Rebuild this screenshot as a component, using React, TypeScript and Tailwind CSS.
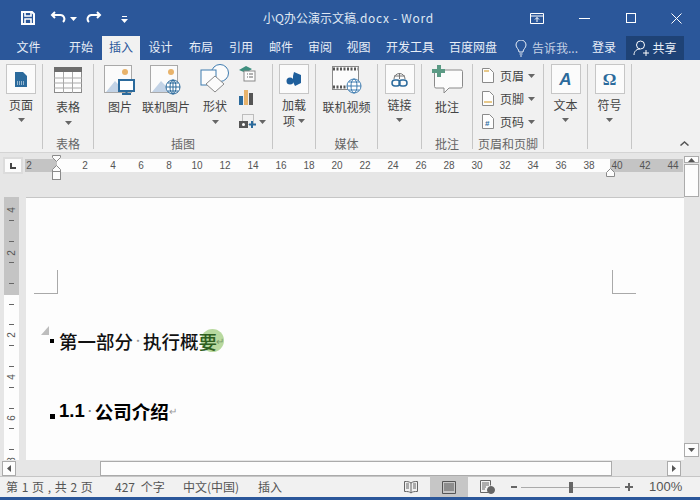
import React from "react";

const F = "font-['Noto_Sans_CJK_SC','Liberation_Sans',sans-serif]";

const Caret = ({ c = "#666" }: { c?: string }) => (
  <svg width="7" height="4" viewBox="0 0 7 4" className="shrink-0"><path d="M0 0h7L3.5 4z" fill={c} /></svg>
);

const Sep = ({ w, label, children }: { w: number; label: string; children: React.ReactNode }) => (
  <div style={{ width: w }} className="relative h-[85px] shrink-0 border-r border-[#c6c6c6] flex flex-col">
    <div className="h-[72px] shrink-0">{children}</div>
    <div className="h-[15px] shrink-0 text-center text-[12px] leading-[15px] text-[#666] whitespace-nowrap">{label}</div>
  </div>
);

const Big = ({ label, icon, boxed, caret = true, top = 0, second }: { label: string; icon: React.ReactNode; boxed?: boolean; caret?: boolean; top?: number; second?: string }) => (
  <div className="flex flex-col items-center h-full" style={{ paddingTop: top }}>
    <div className={boxed ? "w-[30px] h-[30px] border border-[#c6c6c6] bg-[#fbfbfb] flex items-center justify-center" : "h-[30px] flex items-center justify-center"}>{icon}</div>
    <div className={`${boxed ? "mt-[3px]" : "mt-[4px]"} text-[12px] leading-[16px] text-[#444] whitespace-nowrap`}>{label}</div>
    {second ? (
      <div className="flex items-center gap-[3px] text-[12px] leading-[16px] text-[#444]">{second}<Caret /></div>
    ) : caret ? (
      <div className={boxed ? "mt-[5px]" : "mt-[6px]"}><Caret /></div>
    ) : null}
  </div>
);

const Pic = ({ overlay }: { overlay: React.ReactNode }) => (
  <svg width="32" height="30" viewBox="0 0 32 30">
    <rect x=".5" y=".5" width="27" height="27" fill="#fbfbfb" stroke="#a9a9a9" />
    <circle cx="21" cy="7" r="3" fill="#e8b36b" />
    <path d="M2 27l9-11 6 6 3-3 7 8z" fill="#c3d3e6" />
    {overlay}
  </svg>
);

const HFIcon = ({ kind }: { kind: number }) => (
  <svg width="12" height="15" viewBox="0 0 12 15" className="shrink-0">
    <path d="M.5.5h7l4 4v10H.5z" fill="#fdfdfd" stroke="#8a8a8a" />
    {kind === 0 && <rect x="2" y="2" width="5" height="2" fill="#e8c98a" />}
    {kind === 1 && <rect x="2" y="10" width="8" height="2" fill="#e8c98a" />}
    {kind === 2 && <text x="3" y="12" fontSize="8" fontWeight="700" fill="#2b6a9c" fontFamily="Liberation Sans">#</text>}
  </svg>
);

const HFRow = ({ kind, label }: { kind: number; label: string }) => (
  <div className="flex items-center h-[23px] pl-[9px]">
    <HFIcon kind={kind} />
    <span className="ml-[6px] text-[12px] text-[#444] leading-none">{label}</span>
    <span className="ml-[4px]"><Caret /></span>
  </div>
);

const Tab = ({ t, w, active }: { t: string; w: number; active?: boolean }) => (
  <div style={{ width: w }} className={`h-[24px] shrink-0 text-center text-[12px] leading-[22px] whitespace-nowrap ${active ? "bg-[#f1f1f1] text-[#2b579a]" : "text-[#e8eef7]"}`}>{t}</div>
);

const Tick = ({ m }: { m: number }) => <div className="w-[5px] h-px bg-[#666] shrink-0" style={{ marginTop: m }} />;
const VNum = ({ n, m }: { n: string; m: number }) => <span className="-rotate-90 shrink-0 h-[10px]" style={{ marginTop: m }}>{n}</span>;

export default function App() {
  const hnums = ["2", "", "2", "4", "6", "8", "10", "12", "14", "16", "18", "20", "22", "24", "26", "28", "30", "32", "34", "36", "38", "40", "42", "44"];
  return (
    <div className={`${F} w-[700px] h-[500px] overflow-hidden bg-[#e6e6e6] flex flex-col`}>
      {/* title bar */}
      <div className="h-[36px] shrink-0 bg-[#2b579a] flex items-center text-white relative">
        <svg width="16" height="16" viewBox="0 0 16 16" className="ml-[20px]" fill="none" stroke="#fff" strokeWidth="2">
          <path d="M2 2h10l2 2v10H2z" /><path d="M5 2v4h6V2M5 14V9h6v5" strokeWidth="1.6" />
        </svg>
        <svg width="18" height="14" viewBox="0 0 18 14" className="ml-[14px]" fill="none" stroke="#fff" strokeWidth="2"><path d="M5 1L2 4l3 3M2 4h8a4 4 0 0 1 3 7" /></svg>
        <span className="ml-[2px] mt-[1px]"><Caret c="#fff" /></span>
        <svg width="16" height="14" viewBox="0 0 16 14" className="ml-[9px]" fill="none" stroke="#fff" strokeWidth="2"><path d="M11 1l3 3-3 3M14 4H6a4 4 0 0 0-3 7" /></svg>
        <svg width="7" height="7" viewBox="0 0 7 7" className="ml-[19px] mt-[3px]"><path d="M1 0h5v1H1zM0 3h7L3.500 7z" fill="#fff" /></svg>
        <div className="absolute left-[263px] top-[9px] text-[12px] leading-[18px] text-[#dfe7f3] whitespace-nowrap">小Q办公演示文稿<span className="tracking-[0.7px]">.docx - Word</span></div>
        <div className="ml-auto flex items-center">
          <svg width="14" height="11" viewBox="0 0 14 11" fill="none" stroke="#fff"><path d="M.5 .5h13v10H.5zM.5 3h13M7 9V4.500M5 6.500l2-2 2 2" /></svg>
          <div className="ml-[35px] w-[11px] h-px bg-white" />
          <div className="ml-[36px] w-[10px] h-[10px] border border-white" />
          <svg width="11" height="11" viewBox="0 0 11 11" className="ml-[35px] mr-[18px]" stroke="#fff" strokeWidth="1"><path d="M.5 .5l10 10M10.500 .5l-10 10" /></svg>
        </div>
      </div>
      {/* tabs */}
      <div className="h-[24px] shrink-0 bg-[#2b579a] flex items-start">
        <Tab t="文件" w={57} />
        <div className="w-[5px]" />
        <Tab t="开始" w={38} />
        <div className="w-[2px]" />
        <Tab t="插入" w={38} active />
        <Tab t="设计" w={41} />
        <Tab t="布局" w={40} />
        <Tab t="引用" w={40} />
        <Tab t="邮件" w={40} />
        <Tab t="审阅" w={38} />
        <Tab t="视图" w={39} />
        <Tab t="开发工具" w={64} />
        <Tab t="百度网盘" w={62} />
        <div className="flex items-center h-[24px] ml-[11px] w-[77px] text-[12px] text-[#c3d0e4] whitespace-nowrap">
          <svg width="12" height="17" viewBox="0 0 12 17" fill="none" stroke="#e8eef7" className="mr-[5px] shrink-0"><path d="M4 12c0-3-3-4-3-7a5 5 0 0 1 10 0c0 3-3 4-3 7zM4.500 14h3M5 16h2" /></svg>
          告诉我...
        </div>
        <div className="w-[34px] text-[12px] leading-[22px] text-[#e8eef7]">登录</div>
        <div className="w-[58px] h-[24px] bg-[#1e4276] flex items-center justify-center gap-[3px] text-[12px] text-[#e8eef7]">
          <svg width="16" height="16" viewBox="0 0 16 16" fill="none" stroke="#fff"><circle cx="7.500" cy="5" r="4" /><path d="M1 15c0-4 3-6 6-6M10 13h6M13 10v6" /></svg>
          共享
        </div>
      </div>
      {/* ribbon */}
      <div className="h-[93px] shrink-0 bg-[#f1f1f1] border-b border-[#d4d4d4] flex pt-[4px] relative">
        <Sep w={43} label="">
          <Big label="页面" boxed top={0} icon={
            <svg width="12" height="15" viewBox="0 0 12 15"><path d="M0 0h8l4 4v11H0z" fill="#2b6a9c" /><path d="M2 10h8M2 12h8" stroke="#fff" strokeWidth="1" strokeDasharray="1 1" /></svg>
          } />
        </Sep>
        <Sep w={51} label="表格">
          <Big label="表格" top={1} icon={
            <svg width="28" height="26" viewBox="0 0 28 26"><rect x=".5" y=".5" width="27" height="25" fill="#fdfdfd" stroke="#8a8a8a" /><rect width="28" height="5" fill="#6d6d6d" /><path d="M0 11h28M0 16h28M0 21h28M9.500 5v21M18.500 5v21" stroke="#a9a9a9" /></svg>
          } />
        </Sep>
        <Sep w={179} label="插图">
          <div className="flex h-full pl-[10px] items-start">
            <Big label="图片" top={1} caret={false} icon={
              <Pic overlay={<g><rect x="15" y="15" width="15" height="11" fill="#fff" stroke="#2b6a9c" strokeWidth="2" /><path d="M22.500 26v2M18 29h9" stroke="#2b6a9c" strokeWidth="2" /></g>} />
            } />
            <div className="ml-[6px]"><Big label="联机图片" top={1} caret={false} icon={
              <Pic overlay={<g fill="#fff" stroke="#2b6a9c"><circle cx="23" cy="22" r="7" /><path d="M16 22h14M23 15v14M18 18h10M18 26h10" fill="none" /><ellipse cx="23" cy="22" rx="3" ry="7" fill="none" /></g>} />
            } /></div>
            <div className="ml-[10px] w-[30px]"><Big label="形状" top={0} icon={
              <svg width="30" height="30" viewBox="0 0 30 30" fill="#fcfcfc" stroke="#3f7cb0"><circle cx="20" cy="9" r="8.500" /><rect x="1" y="6" width="15" height="15" /><path d="M15 12l9 8-9 8-9-8z" stroke="#8a8a8a" /></svg>
            } /></div>
            <div className="ml-[9px] pt-[2px] flex flex-col gap-[5px]">
              <svg width="17" height="17" viewBox="0 0 17 17"><path d="M0 4l7-4 6 3-6 4z" fill="#3f8f7f" /><rect x="5" y="5" width="11" height="10" fill="#fcfcfc" stroke="#8a8a8a" /><path d="M8 8h1M8 11h1M10 8h4M10 11h4" stroke="#666" /></svg>
              <svg width="15" height="16" viewBox="0 0 15 16" className="mt-[2px]"><rect y="6" width="4" height="9" fill="#2b6a9c" /><rect x="5" y="0" width="4" height="15" fill="#e8b36b" /><rect x="10" y="3" width="4" height="12" fill="#555" /></svg>
              <div className="flex items-center gap-[3px] mt-[3px]">
                <svg width="17" height="15" viewBox="0 0 17 15"><rect x="3.500" y=".5" width="11" height="10" fill="none" stroke="#888" strokeDasharray="1 1" /><rect y="7" width="9" height="7" fill="#555" /><circle cx="4.500" cy="10.500" r="1.500" fill="#fff" /><path d="M13 7v7M10 10.500h7" stroke="#2b6a9c" strokeWidth="2" /></svg>
                <Caret />
              </div>
            </div>
          </div>
        </Sep>
        <Sep w={43} label="">
          <Big label="加载" boxed second="项" caret={false} icon={
            <svg width="16" height="15" viewBox="0 0 16 15" fill="#1f5f9c"><path d="M8 0l7 3v8l-6 3-2-4V4z" /><circle cx="4" cy="9" r="3.500" /></svg>
          } />
        </Sep>
        <Sep w={62} label="媒体">
          <Big label="联机视频" top={1} caret={false} icon={
            <svg width="30" height="28" viewBox="0 0 30 28"><rect x=".5" y=".5" width="26" height="23" fill="#fcfcfc" stroke="#8a8a8a" /><path d="M1 3h25M1 21h25" stroke="#555" strokeWidth="3" strokeDasharray="2 1.500" /><g fill="#fff" stroke="#3f7cb0"><circle cx="22" cy="20" r="7" /><ellipse cx="22" cy="20" rx="3" ry="7" fill="none" /><path d="M15 20h14M17 16h10M17 24h10" fill="none" /></g></svg>
          } />
        </Sep>
        <Sep w={44} label="">
          <Big label="链接" boxed icon={
            <svg width="17" height="17" viewBox="0 0 17 17" fill="none"><path d="M3 8a5.500 5.500 0 0 1 11 0M3 5h11M8.500 2v6" stroke="#777" /><rect x="1" y="9" width="8" height="6" rx="3" stroke="#2b6a9c" strokeWidth="1.500" /><rect x="8" y="9" width="8" height="6" rx="3" stroke="#2b6a9c" strokeWidth="1.500" /></svg>
          } />
        </Sep>
        <Sep w={51} label="批注">
          <Big label="批注" top={1} caret={false} icon={
            <svg width="31" height="30" viewBox="0 0 31 30"><path d="M4 5h25a1.500 1.500 0 0 1 1.500 1.500v15a1.500 1.500 0 0 1-1.500 1.500H17l-5 5v-5H4a1.500 1.500 0 0 1-1.500-1.500v-15A1.500 1.500 0 0 1 4 5z" fill="#fcfcfc" stroke="#8a8a8a" /><path d="M5 0h4v4h4v4H9v4H5V8H0V4h5z" fill="#5b9a84" /></svg>
          } />
        </Sep>
        <Sep w={71} label="页眉和页脚">
          <div className="flex flex-col">
            <HFRow kind={0} label="页眉" />
            <HFRow kind={1} label="页脚" />
            <HFRow kind={2} label="页码" />
          </div>
        </Sep>
        <Sep w={44} label="">
          <Big label="文本" boxed icon={
            <span className="text-[17px] leading-none font-bold italic text-[#2b6a9c] font-['Liberation_Sans',sans-serif]">A</span>
          } />
        </Sep>
        <Sep w={44} label="">
          <Big label="符号" boxed icon={
            <span className="text-[17px] leading-none font-bold text-[#2b6a9c] font-['Liberation_Serif',serif]">Ω</span>
          } />
        </Sep>
        <svg width="9" height="5" viewBox="0 0 9 5" fill="none" stroke="#555" strokeWidth="1.500" className="absolute right-[11px] bottom-[6px]"><path d="M.5 4.500l4-3.500 4 3.500" /></svg>
      </div>
      {/* ruler row */}
      <div className="h-[44px] shrink-0 flex items-start pt-[4px] bg-[#e6e6e6]">
        <div className="ml-[3px] w-[20px] h-[17px] bg-[#fcfcfc] border-2 border-[#dcdcdc] flex items-center justify-center">
          <svg width="6" height="6" viewBox="0 0 6 6"><path d="M0 0h2v4h4v2H0z" fill="#444" /></svg>
        </div>
        <div className="relative ml-[2px] mt-[2px] w-[658px] h-[13px] bg-[#fdfdfd] flex">
          <div className="w-[32px] shrink-0 bg-[#c4c4c4]" />
          <div className="flex-1" />
          <div className="w-[73px] shrink-0 bg-[#c4c4c4]" />
          <div className="absolute inset-0 overflow-hidden flex">
            <div className="flex -ml-[10px]">
              {hnums.map((n, i) => (
                <div key={i} className="w-[28px] shrink-0 text-center text-[10px] leading-[13px] text-[#555] font-['Liberation_Sans',sans-serif]">{n}</div>
              ))}
            </div>
          </div>
          <svg width="10" height="26" viewBox="0 0 10 26" className="absolute left-[27px] -top-[4px]" fill="#fcfcfc" stroke="#8a8a8a"><path d="M.5 .5h8v2l-4 4-4-4zM4.500 10.500l4 4v2h-8v-2z" /><rect x=".5" y="16.500" width="8" height="8" /></svg>
          <svg width="10" height="10" viewBox="0 0 10 10" className="absolute left-[581px] top-[9px]" fill="#fcfcfc" stroke="#8a8a8a"><path d="M4.500 .5l4 4v4h-8v-4z" /></svg>
        </div>
        <div className="ml-[1px] w-[15px] h-[44px] flex flex-col -mt-[4px] pt-[3px] bg-[#e6e6e6]">
          <div className="h-[14px] border border-[#ababab] bg-[#fdfdfd] flex items-center justify-center"><svg width="7" height="4" viewBox="0 0 7 4"><path d="M3.500 0L7 4H0z" fill="#555" /></svg></div>
          <div className="h-[33px] shrink-0 border border-[#ababab] bg-[#fdfdfd] mt-[1px]" />
        </div>
      </div>
      {/* body */}
      <div className="flex-1 min-h-0 flex">
        <div className="ml-[4px] w-[15px] shrink-0 flex flex-col items-center bg-[#fdfdfd] overflow-hidden text-[10px] leading-[10px] text-[#555] font-['Liberation_Sans',sans-serif]">
          <div className="w-full h-[98px] shrink-0 bg-[#c4c4c4] flex flex-col items-center">
            <VNum n="4" m={8} /><Tick m={5} /><Tick m={20} /><VNum n="2" m={6} /><Tick m={4} /><Tick m={20} />
          </div>
          <Tick m={9} /><Tick m={19} /><VNum n="2" m={5} /><Tick m={5} /><Tick m={20} /><VNum n="4" m={5} /><Tick m={5} /><Tick m={20} /><VNum n="6" m={4} /><Tick m={5} /><Tick m={20} /><VNum n="8" m={5} />
        </div>
        <div className="ml-[7px] w-[658px] shrink-0 bg-[#fdfdfd] border-t border-[#c6c6c6] relative overflow-hidden">
          <div className="flex justify-between pl-[8px] pr-[48px] pt-[72px]">
            <div className="w-[24px] h-[24px] border-r border-b border-[#a9a9a9]" />
            <div className="w-[24px] h-[24px] border-l border-b border-[#a9a9a9]" />
          </div>
          <div className="pl-[24px] mt-[34px] flex items-center h-[26px] text-[18.5px] leading-[26px] text-[#111] font-medium whitespace-nowrap relative">
            <svg width="8" height="9" viewBox="0 0 8 9" className="absolute left-[15px] -top-[2px]"><path d="M8 0v9H0z" fill="#bdbdbd" /></svg>
            <div className="w-[4px] h-[4px] bg-black mr-[5px]" />
            第一部分<span className="text-[#999] text-[10px] w-[10px] text-center">·</span>执行概
            <span className="relative text-[#2f5f1f]">
              <span className="absolute left-[2px] top-[1px] w-[23px] h-[23px] rounded-full bg-[#b8d99f]" />
              <span className="relative">要</span>
            </span>
            <span className="relative text-[10px] text-[#7a9a6a] -ml-[1px]">↵</span>
          </div>
          <div className="pl-[24px] mt-[44px] flex items-center h-[26px] text-[18.5px] leading-[26px] text-black font-bold whitespace-nowrap">
            <div className="w-[5px] h-[5px] bg-black mr-[4px] mt-[11px]" />
            <span className="font-['Liberation_Sans',sans-serif]">1.1</span><span className="text-[#777] text-[10px] w-[10px] text-center font-normal">·</span>公司介绍
            <span className="text-[10px] text-[#999] font-normal">↵</span>
          </div>
        </div>
        <div className="w-[15px] shrink-0 flex flex-col justify-end pb-[3px]">
          <div className="h-[14px] border border-[#ababab] bg-[#fdfdfd] flex items-center justify-center"><Caret c="#555" /></div>
        </div>
      </div>
      {/* h scrollbar */}
      <div className="h-[16px] shrink-0 flex bg-[#e6e6e6] pt-[1px]">
        <div className="ml-[2px] w-[14px] h-[15px] border border-[#ababab] bg-[#fdfdfd] flex items-center justify-center"><svg width="4" height="7" viewBox="0 0 4 7"><path d="M4 0v7L0 3.500z" fill="#555" /></svg></div>
        <div className="ml-[84px] w-[512px] h-[15px] border border-[#ababab] bg-[#fdfdfd]" />
        <div className="ml-[55px] w-[14px] h-[15px] border border-[#ababab] bg-[#fdfdfd] flex items-center justify-center"><svg width="4" height="7" viewBox="0 0 4 7"><path d="M0 0v7l4-3.500z" fill="#555" /></svg></div>
      </div>
      {/* status bar */}
      <div className="h-[21px] shrink-0 bg-[#f1f1f1] border-t border-[#c6c6c6] flex items-center text-[12px] text-[#555] whitespace-nowrap">
        <span className="ml-[6px] w-[109px] [word-spacing:1px]">第 1 页 , 共 2 页</span>
        <span className="w-[68px] [word-spacing:3px]">427 个字</span>
        <span className="w-[75px]">中文(中国)</span>
        <span className="w-[120px]">插入</span>
        <svg width="14" height="13" viewBox="0 0 14 13" className="ml-[26px] shrink-0" fill="none" stroke="#666"><path d="M7 2C5 .5 3 .5 .5 .5v10c3 0 5 0 6.500 1.500 1.500-1.500 3.500-1.500 6.500-1.500V.5C11 .5 9 .5 7 2zM7 2v10M2 3h3M2 5h3M2 7h3M9 3h3M9 5h3M9 7h3" /></svg>
        <div className="ml-[12px] w-[38px] h-[20px] shrink-0 bg-[#c6c6c6] flex items-center justify-center">
          <svg width="14" height="13" viewBox="0 0 14 13" fill="none" stroke="#555"><path d="M.5 .5h13v12H.5zM2 3h10M2 5h10M2 7h10M2 9h10" /></svg>
        </div>
        <svg width="15" height="14" viewBox="0 0 15 14" className="ml-[12px] shrink-0" fill="none" stroke="#666"><path d="M8 12.500H.5V.5h10v5M2 3h7M2 5h7M2 7h4M2 9h3" /><circle cx="11" cy="10" r="3.500" fill="#666" /></svg>
        <div className="ml-[16px] w-[6px] h-[2px] bg-[#666] shrink-0" />
        <div className="ml-[4px] w-[99px] h-px bg-[#aaa] relative shrink-0"><div className="absolute left-[48px] -top-[5px] w-[4px] h-[11px] bg-[#666]" /></div>
        <svg width="8" height="8" viewBox="0 0 8 8" className="ml-[5px] shrink-0"><path d="M3 0h2v3h3v2H5v3H3V5H0V3h3z" fill="#666" /></svg>
        <span className="ml-[16px] font-['Liberation_Sans',sans-serif] text-[13px]">100%</span>
      </div>
      <div className="h-[3px] shrink-0 bg-[#2b579a]" />
    </div>
  );
}
